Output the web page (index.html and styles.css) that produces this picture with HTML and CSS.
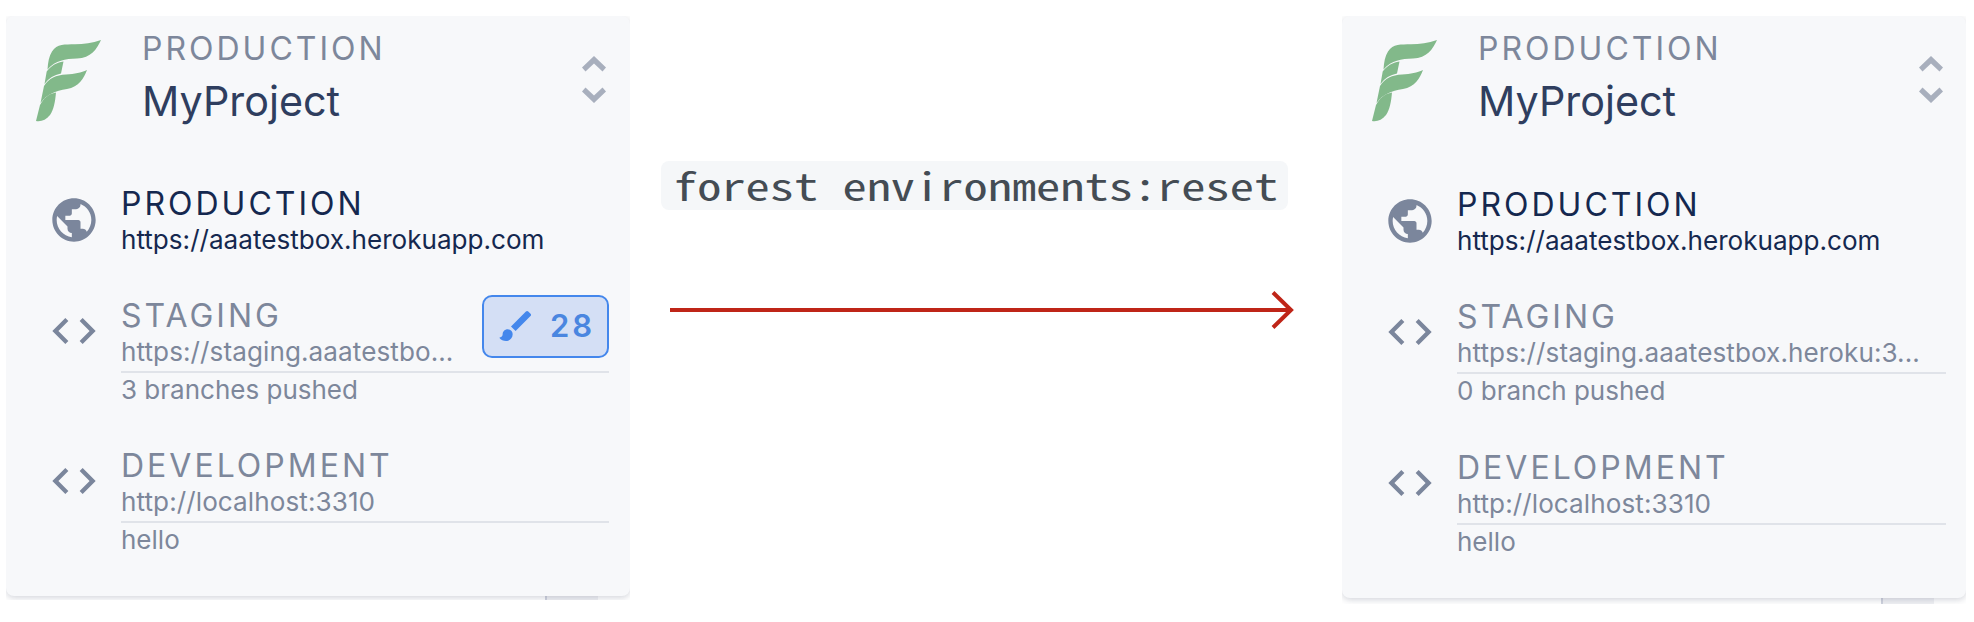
FILE: index.html
```
<!DOCTYPE html>
<html lang="en">
<head>
<meta charset="utf-8">
<title>forest environments:reset</title>
<link rel="stylesheet" href="styles.css">
</head>
<body>
<svg class="sprites" aria-hidden="true">
  <symbol id="logo" viewBox="0 0 65 82">
    <path d="M65 0C61 9 55 18 41 18.500C29 19 20 20 11.500 29.500C12 22 13 16 16 11.500C21 3.500 29 4.500 39 4.200C48 4 56 3 65 0Z"/>
    <path d="M10.700 31.500C15 26 20 22.500 27.500 21.500L25 33.500C18 35 13 38 8.500 44Z"/>
    <path d="M51 30C48 38 43 47 31 49C19 51 11 54 4.500 63L8 46C13 38 20 35 30 34.500C39 34 45 32.500 51 30Z"/>
    <path d="M4 65C8 58 12 54 20 52.500C19 62 18 69 14 75C10 80 5 82 0 81Z"/>
  </symbol>
  <symbol id="globe" viewBox="0 0 24 24"><path d="M12 2C6.480 2 2 6.480 2 12s4.480 10 10 10 10-4.480 10-10S17.520 2 12 2zm-1 17.930c-3.950-.490-7-3.850-7-7.930 0-.620.080-1.210.210-1.790L9 15v1c0 1.100.900 2 2 2v1.930zm6.900-2.540c-.260-.810-1-1.390-1.900-1.390h-1v-3c0-.550-.450-1-1-1H8v-2h2c.550 0 1-.450 1-1V7h2c1.100 0 2-.900 2-2v-.410c2.930 1.190 5 4.060 5 7.410 0 2.080-.800 3.970-2.100 5.390z"/></symbol>
  <symbol id="code" viewBox="0 0 24 24"><path d="M9.400 16.600L4.800 12l4.600-4.600L8 6l-6 6 6 6 1.400-1.400zm5.200 0l4.600-4.600-4.600-4.600L16 6l6 6-6 6-1.400-1.400z"/></symbol>
  <symbol id="brush" viewBox="0 0 24 24"><path d="M7 14c-1.660 0-3 1.340-3 3 0 1.310-1.160 2-2 2 .920 1.220 2.490 2 4 2 2.210 0 4-1.790 4-4 0-1.660-1.340-3-3-3zm13.710-9.370l-1.340-1.340a.996.996 0 0 0-1.410 0L9 12.250 11.750 15l8.960-8.960a.996.996 0 0 0 0-1.410z"/></symbol>
  <symbol id="sort" viewBox="0 0 24 47"><path d="M0 11.500L12 0L24 11.500L20.500 15.500L12 7.500L3.500 15.500ZM0 35.500L12 47L24 35.500L20.500 31.500L12 39.500L3.500 31.500Z"/></symbol>
</svg>
<main class="page">
  <section class="frame before">
    <div class="card">
      <header class="head">
        <svg class="logo"><use href="#logo"/></svg>
        <div class="titles">
          <div class="label">PRODUCTION</div>
          <div class="name">MyProject</div>
        </div>
        <svg class="sort"><use href="#sort"/></svg>
      </header>
      <ul class="envs">
        <li class="env current">
          <svg class="icon"><use href="#globe"/></svg>
          <div class="body">
            <div class="label">PRODUCTION</div>
            <div class="url">https://aaatestbox.herokuapp.com</div>
          </div>
        </li>
        <li class="env">
          <svg class="icon"><use href="#code"/></svg>
          <div class="body">
            <div class="top">
              <div class="info">
                <div class="label">STAGING</div>
                <div class="url">https://staging.aaatestbo...</div>
              </div>
              <div class="badge"><svg class="brush"><use href="#brush"/></svg><span>28</span></div>
            </div>
            <div class="note">3 branches pushed</div>
          </div>
        </li>
        <li class="env">
          <svg class="icon"><use href="#code"/></svg>
          <div class="body">
            <div class="label">DEVELOPMENT</div>
            <div class="url">http://localhost:3310</div>
            <div class="note">hello</div>
          </div>
        </li>
      </ul>
    </div>
    <div class="stub"></div>
  </section>
  <section class="step">
    <div class="command"><code>forest environments:reset</code></div>
    <svg class="arrow" viewBox="0 0 624 40"><path d="M0 20H621M603 2.500L621 20L603 37.500"/></svg>
  </section>
  <section class="frame after">
    <div class="card">
      <header class="head">
        <svg class="logo"><use href="#logo"/></svg>
        <div class="titles">
          <div class="label">PRODUCTION</div>
          <div class="name">MyProject</div>
        </div>
        <svg class="sort"><use href="#sort"/></svg>
      </header>
      <ul class="envs">
        <li class="env current">
          <svg class="icon"><use href="#globe"/></svg>
          <div class="body">
            <div class="label">PRODUCTION</div>
            <div class="url">https://aaatestbox.herokuapp.com</div>
          </div>
        </li>
        <li class="env">
          <svg class="icon"><use href="#code"/></svg>
          <div class="body">
            <div class="label">STAGING</div>
            <div class="url">https://staging.aaatestbox.heroku:3...</div>
            <div class="note">0 branch pushed</div>
          </div>
        </li>
        <li class="env">
          <svg class="icon"><use href="#code"/></svg>
          <div class="body">
            <div class="label">DEVELOPMENT</div>
            <div class="url">http://localhost:3310</div>
            <div class="note">hello</div>
          </div>
        </li>
      </ul>
    </div>
    <div class="stub"></div>
  </section>
</main>
</body>
</html>
```
FILE: styles.css
```
* { box-sizing: border-box; }
body { margin: 0; background: #fff; font-family: Inter, "Liberation Sans", sans-serif; }
.sprites { display: none; }
.page { display: flex; width: 1974px; height: 622px; overflow: hidden; }
.frame { flex: none; padding-top: 16px; overflow: hidden; }
.before { width: 630px; height: 600px; padding-left: 6px; }
.after { width: 624px; height: 604px; margin-left: 49px; }
.card { width: 624px; height: 580px; border-radius: 8px; background: #f7f8fa; box-shadow: 0 2px 6px rgba(40, 50, 80, .2); clip-path: inset(0 0 -10px 0); }
.after .card { height: 582px; }
.stub { width: 53px; height: 6px; margin-left: 539px; border-left: 2px solid #cfd3de; background: rgba(40, 50, 100, .07); }
.head { display: flex; padding: 12px 24px 0 30px; }
.logo { width: 65px; height: 82px; margin-top: 12px; fill: #82b98a; }
.titles { flex: 1; margin-left: 41px; color: #2f3e5f; }
.head .label { line-height: 40px; padding-top: 1px; }
.label { font-size: 32px; line-height: 38px; letter-spacing: 3px; color: #7d879b; white-space: nowrap; }
.name { margin-top: 6px; font-size: 41.300px; line-height: 52px; }
.sort { width: 24px; height: 47px; margin-top: 28px; fill: #a8afbd; }
.after .sort { margin-right: -1px; }
.envs { list-style: none; margin: 0; padding: 58px 21px 0 42px; }
.after .envs { padding: 59px 20px 0 42px; }
.env { display: flex; height: 112px; }
.env + .env { height: 150px; }
.after .env + .env { height: 151px; }
.icon { flex: none; width: 52px; height: 52px; margin: 9px 21px 0 0; fill: #7b869c; }
.env + .env .icon { margin-top: 8px; }
.body { flex: 1; min-width: 0; }
.url, .note { font-size: 26.100px; line-height: 30px; color: #7d879b; white-space: nowrap; }
.url { margin-top: 2px; }
.env + .env .url { letter-spacing: .08px; }
.note { margin-top: 4px; padding-top: 2px; border-top: 2px solid #e0e3e9; font-size: 26px; }
.current .label, .current .url { color: #15284f; }
.top { display: flex; justify-content: space-between; height: 70px; }
.badge { display: flex; align-items: center; width: 127px; height: 63px; margin-top: -2px; padding: 0 0 2px 12px; border: 2px solid #4487ec; border-radius: 10px; background: #d4dff5; color: #4a86e0; font-size: 31px; font-weight: 600; letter-spacing: 3px; }
.brush { width: 40px; height: 40px; margin-right: 14px; fill: #4487ec; }
.step { flex: none; width: 632px; margin-left: 31px; padding-top: 161px; }
.command { width: 627px; height: 49px; padding-left: 12px; border-radius: 8px; background: #f5f7f9; color: #444c54; }
.command code { display: block; width: 480px; font-family: "Noto Sans Mono CJK SC", "DejaVu Sans Mono", monospace; font-size: 38px; font-weight: 400; line-height: 48px; white-space: pre; transform: scaleX(1.274); transform-origin: 0 0; }
.arrow { display: block; width: 624px; height: 40px; margin: 80px 0 0 9px; fill: none; stroke: #bf2518; stroke-width: 4; }
```
